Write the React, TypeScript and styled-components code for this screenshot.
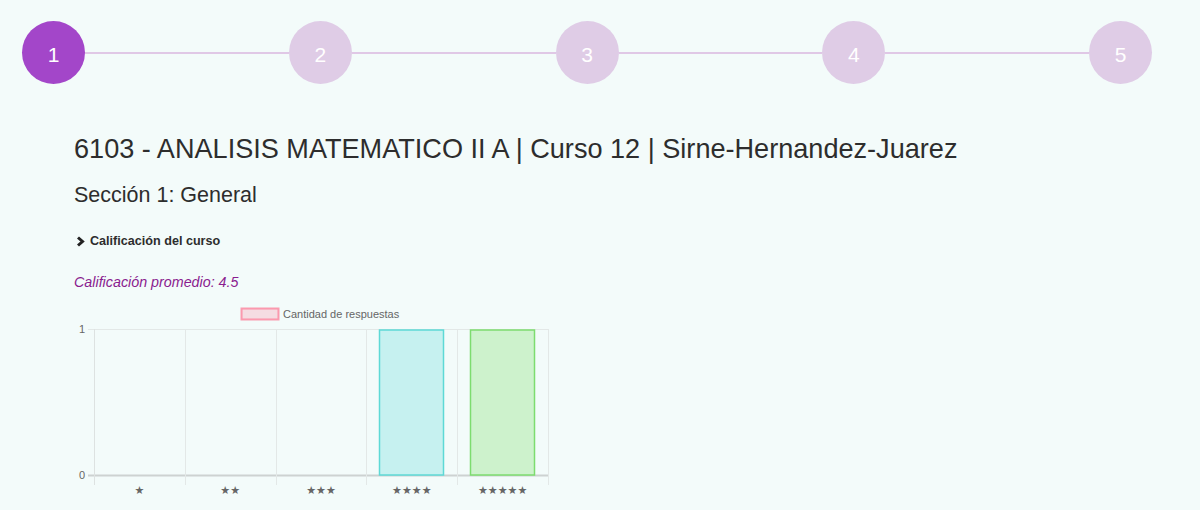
import styled, { createGlobalStyle } from "styled-components";

const GlobalStyle = createGlobalStyle`
  html, body {
    margin: 0;
    padding: 0;
    background: #f3fbfa;
  }
  body {
    font-family: "Liberation Sans", Arial, sans-serif;
    color: #333;
  }
`;

const steps = [1, 2, 3, 4, 5];
const current = 1;

const labels = ["★", "★★", "★★★", "★★★★", "★★★★★"];
const values = [0, 0, 0, 1, 1];
const barColors = [
  { fill: "rgba(255,99,132,0.2)", stroke: "rgb(255,99,132)" },
  { fill: "rgba(54,162,235,0.2)", stroke: "rgb(54,162,235)" },
  { fill: "rgba(255,206,86,0.2)", stroke: "rgb(255,206,86)" },
  { fill: "#c6f1f0", stroke: "#5ed9d6" },
  { fill: "#cdf2cc", stroke: "#7ddc6f" },
];

export default function App() {
  // geometría del gráfico (coordenadas dentro del svg)
  const left = 20;
  const colW = 90.8;
  const top = 25;
  const bottom = 171;
  const barW = 64;

  return (
    <Page>
      <GlobalStyle />
      <Stepper>
        {steps.map((s, i) => (
          <StepGroup key={s} $last={i === steps.length - 1}>
            <Circle $active={s === current}>{s}</Circle>
            {i < steps.length - 1 && <Line />}
          </StepGroup>
        ))}
      </Stepper>

      <Content>
        <Title>6103 - ANALISIS MATEMATICO II A | Curso 12 | Sirne-Hernandez-Juarez</Title>
        <Section>Sección 1: General</Section>
        <Toggle>
          <svg width="9" height="11" viewBox="0 0 9 11">
            <polyline points="2,1.5 6.5,5.5 2,9.5" fill="none" stroke="#222" strokeWidth="3" />
          </svg>
          Calificación del curso
        </Toggle>
        <Average>Calificación promedio: 4.5</Average>

        <Chart width="490" height="200" viewBox="0 0 490 200">
          <rect x="167.5" y="4.5" width="37" height="11" fill="rgba(255,99,132,0.2)" stroke="rgba(255,99,132,0.6)" strokeWidth="2" />
          <text x="209" y="14" fontSize="11" fill="#666" fontFamily="Liberation Sans, Arial, sans-serif">
            Cantidad de respuestas
          </text>

          {/* grilla horizontal */}
          <line x1={left - 6} x2={left + colW * 5} y1={top + 0.5} y2={top + 0.5} stroke="#e3e8e7" strokeWidth="1" />
          <line x1={left - 6} x2={left + colW * 5} y1={bottom + 0.5} y2={bottom + 0.5} stroke="#cdd2d1" strokeWidth="2" />

          {/* grilla vertical */}
          {[0, 1, 2, 3, 4, 5].map((k) => (
            <line
              key={k}
              x1={Math.round(left + colW * k) + 0.5}
              x2={Math.round(left + colW * k) + 0.5}
              y1={top}
              y2={bottom + 10}
              stroke={k === 0 ? "#dde2e1" : "#e3e8e7"}
              strokeWidth="1"
            />
          ))}

          <text x="11" y={top + 4} fontSize="11" fill="#666" textAnchor="end" fontFamily="Liberation Sans, Arial, sans-serif">1</text>
          <text x="11" y={bottom + 4} fontSize="11" fill="#666" textAnchor="end" fontFamily="Liberation Sans, Arial, sans-serif">0</text>

          {values.map((v, i) => {
            if (!v) return null;
            const cx = left + colW * i + colW / 2;
            const x = Math.round(cx - barW / 2) - 0.5;
            return (
              <rect
                key={i}
                x={x}
                y={top + 1}
                width={barW}
                height={bottom - top - 1}
                fill={barColors[i].fill}
                stroke={barColors[i].stroke}
                strokeWidth="1.5"
              />
            );
          })}

          {labels.map((l, i) => (
            <text
              key={l}
              x={left + colW * i + colW / 2}
              y={bottom + 19}
              fontSize="11"
              fill="#666"
              textAnchor="middle"
              fontFamily="DejaVu Sans, sans-serif"
            >
              {l}
            </text>
          ))}
        </Chart>
      </Content>
    </Page>
  );
}

const Page = styled.div`
  width: 1200px;
  height: 510px;
  overflow: hidden;
`;

const Stepper = styled.div`
  display: flex;
  align-items: center;
  padding: 21px 48px 0 22px;
`;

const StepGroup = styled.div<{ $last: boolean }>`
  display: flex;
  align-items: center;
  flex: ${({ $last }) => ($last ? "0 0 auto" : "1 1 0")};
`;

const Circle = styled.div<{ $active: boolean }>`
  width: 63px;
  height: 63px;
  border-radius: 50%;
  flex: 0 0 auto;
  display: flex;
  align-items: center;
  justify-content: center;
  font-size: 21px;
  color: #fff;
  padding-top: 4px;
  box-sizing: border-box;
  background: ${({ $active }) => ($active ? "#a346c9" : "#dfcce6")};
`;

const Line = styled.div`
  flex: 1;
  height: 2px;
  background: #e0c8e6;
`;

const Content = styled.div`
  padding: 49px 0 0 74px;
`;

const Title = styled.h1`
  margin: 0;
  font-size: 27.1px;
  font-weight: 400;
  line-height: 1.2;
  color: #2d2d2d;
`;

const Section = styled.h2`
  margin: 17.5px 0 0;
  font-size: 21.5px;
  font-weight: 400;
  line-height: 1.2;
  color: #2d2d2d;
`;

const Toggle = styled.div`
  margin-top: 25px;
  display: flex;
  align-items: center;
  gap: 5px;
  font-size: 12.6px;
  font-weight: 700;
  line-height: 1.2;
  color: #2d2d2d;
  margin-left: 2px;
`;

const Average = styled.p`
  margin: 25px 0 0;
  font-size: 14.3px;
  font-style: italic;
  line-height: 1.2;
  color: #8a1c8f;
`;

const Chart = styled.svg`
  display: block;
  margin-top: 13px;
`;
